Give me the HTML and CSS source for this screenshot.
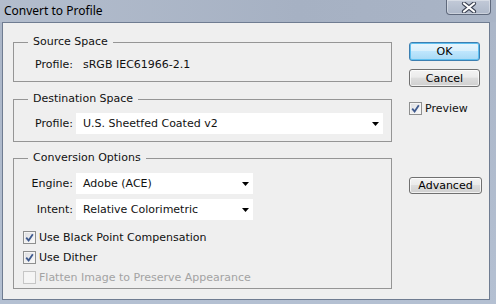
FILE: index.html
```html
<!DOCTYPE html>
<html lang="en">
<head>
    <meta charset="UTF-8">
    <meta name="viewport" content="width=device-width, initial-scale=1.0">
    <link rel="stylesheet" href="styles.css">
</head>
<body>
    <div class="window">
        <div class="titlebar">
            <span class="title">Convert to Profile</span>
            <div class="close">
                <svg width="16" height="11" viewBox="0 0 16 11">
                    <path d="M3 1.5 L13 9.5 M13 1.5 L3 9.5" stroke="#3b4252" stroke-width="4.2" stroke-linecap="round"/>
                    <path d="M3 1.5 L13 9.5 M13 1.5 L3 9.5" stroke="#ffffff" stroke-width="2.2" stroke-linecap="round"/>
                </svg>
            </div>
        </div>
        <div class="client">
            <div class="groups">
                <fieldset class="group group-source">
                    <legend>Source Space</legend>
                    <div class="row">
                        <span class="label">Profile:</span>
                        <span class="value">sRGB IEC61966-2.1</span>
                    </div>
                </fieldset>

                <fieldset class="group group-dest">
                    <legend>Destination Space</legend>
                    <div class="row">
                        <span class="label">Profile:</span>
                        <div class="dropdown dropdown-wide">
                            <span>U.S. Sheetfed Coated v2</span>
                            <svg class="arrow" width="7" height="4" viewBox="0 0 7 4"><path d="M0 0 H7 L3.5 4 Z" fill="#000"/></svg>
                        </div>
                    </div>
                </fieldset>

                <fieldset class="group group-conv">
                    <legend>Conversion Options</legend>
                    <div class="row">
                        <span class="label">Engine:</span>
                        <div class="dropdown">
                            <span>Adobe (ACE)</span>
                            <svg class="arrow" width="7" height="4" viewBox="0 0 7 4"><path d="M0 0 H7 L3.5 4 Z" fill="#000"/></svg>
                        </div>
                    </div>
                    <div class="row row-gap">
                        <span class="label">Intent:</span>
                        <div class="dropdown">
                            <span>Relative Colorimetric</span>
                            <svg class="arrow" width="7" height="4" viewBox="0 0 7 4"><path d="M0 0 H7 L3.5 4 Z" fill="#000"/></svg>
                        </div>
                    </div>
                    <div class="checks">
                        <div class="check-row">
                            <span class="check checked">
                                <svg width="9" height="9" viewBox="0 0 9 9"><path d="M1.2 4.6 L3.6 7.4 L7.8 1.2" fill="none" stroke="#3f5a8e" stroke-width="1.8"/></svg>
                            </span>
                            <span>Use Black Point Compensation</span>
                        </div>
                        <div class="check-row">
                            <span class="check checked">
                                <svg width="9" height="9" viewBox="0 0 9 9"><path d="M1.2 4.6 L3.6 7.4 L7.8 1.2" fill="none" stroke="#3f5a8e" stroke-width="1.8"/></svg>
                            </span>
                            <span>Use Dither</span>
                        </div>
                        <div class="check-row disabled">
                            <span class="check"></span>
                            <span>Flatten Image to Preserve Appearance</span>
                        </div>
                    </div>
                </fieldset>
            </div>

            <div class="actions">
                <div class="btn btn-default">OK</div>
                <div class="btn btn-cancel">Cancel</div>
                <div class="check-row preview">
                    <span class="check checked">
                        <svg width="9" height="9" viewBox="0 0 9 9"><path d="M1.2 4.6 L3.6 7.4 L7.8 1.2" fill="none" stroke="#3f5a8e" stroke-width="1.8"/></svg>
                    </span>
                    <span>Preview</span>
                </div>
                <div class="btn btn-advanced">Advanced</div>
            </div>
        </div>
    </div>
</body>
</html>
```

FILE: styles.css
```css
body {
    margin: 0;
    font-family: "DejaVu Sans", Verdana, sans-serif;
    font-size: 11px;
    color: #111;
}

.window {
    width: 496px;
    height: 304px;
    box-sizing: border-box;
    padding: 0 6px 4px 2px;
    display: flex;
    flex-direction: column;
    background: linear-gradient(to bottom, #aab5c7, #b4c0d2);
}

.titlebar {
    height: 22px;
    display: flex;
    justify-content: space-between;
    align-items: flex-start;
    background: linear-gradient(to right, #b3bdcd, #a6b1c3 60%, #a9b4c6);
    margin: 0 -6px 0 -2px;
    padding: 0 5px 0 4px;
}

.title {
    font-family: "Noto Sans", "Open Sans", sans-serif;
    font-size: 12px;
    line-height: 22px;
    color: #000;
}

.close {
    width: 43px;
    height: 14px;
    border: 1px solid #5f697c;
    border-top: none;
    border-radius: 0 0 4px 4px;
    background: linear-gradient(to bottom, #c2cad8, #aeb8c9);
    box-shadow: inset 0 0 0 1px rgba(255, 255, 255, 0.35);
    display: flex;
    justify-content: center;
    align-items: center;
}

.client {
    flex: 1;
    display: flex;
    border: 1px solid #6f7c91;
    background: #efefef;
    padding: 12px 0 0 10px;
}

.groups {
    width: 379px;
    display: flex;
    flex-direction: column;
}

.group {
    margin: 0;
    padding: 0;
    border: 1px solid #959595;
    min-width: 0;
}

.group legend {
    margin-left: 14px;
    padding: 0 5px;
    line-height: 14px;
    height: 14px;
}

.group-source {
    padding: 5px 0 6px 0;
}

.group-dest {
    margin-top: 10px;
    padding: 7px 0 7px 0;
}

.group-conv {
    margin-top: 9px;
    padding: 8px 0 1px 0;
}

.row {
    display: flex;
    align-items: center;
    height: 21px;
}

.row-gap {
    margin-top: 5px;
}

.label {
    width: 59px;
    text-align: right;
    margin-right: 3px;
}

.value {
    padding-left: 7px;
}

.dropdown {
    width: 177px;
    height: 21px;
    box-sizing: border-box;
    background: #fff;
    display: flex;
    align-items: center;
    justify-content: space-between;
    padding: 0 4px 0 7px;
}

.dropdown-wide {
    width: 307px;
}

.arrow {
    margin-top: 1px;
}

.checks {
    margin-top: 7px;
    padding-left: 9px;
}

.check-row {
    display: flex;
    align-items: center;
    height: 20px;
}

.check {
    width: 13px;
    height: 13px;
    box-sizing: border-box;
    border: 1px solid #8e8f8f;
    background: linear-gradient(135deg, #dcdde0, #fbfbfb);
    box-shadow: inset 0 0 0 1px #f4f4f4;
    margin-right: 3px;
    display: flex;
    align-items: center;
    justify-content: center;
}

.disabled {
    color: #a3a3a3;
}

.disabled .check {
    border-color: #c6c6c6;
    background: #f5f5f5;
}

.actions {
    margin-left: 17px;
    padding-top: 7px;
    width: 73px;
    display: flex;
    flex-direction: column;
}

.btn {
    width: 71px;
    height: 19px;
    box-sizing: border-box;
    border: 1px solid #707070;
    border-radius: 3px;
    display: flex;
    align-items: center;
    justify-content: center;
    color: #000;
    background: linear-gradient(to bottom, #f3f3f3 0%, #ebebeb 45%, #dddddd 50%, #cfcfcf 100%);
    box-shadow: inset 0 0 0 1px rgba(255, 255, 255, 0.7);
}

.btn-default {
    border-color: #3c7fb1;
    background: linear-gradient(to bottom, #eaf6fd 0%, #d9f0fc 45%, #bee6fd 50%, #a7d9f5 100%);
    box-shadow: inset 0 0 0 1px #5ec0f0;
}

.btn-cancel {
    margin-top: 8px;
    height: 18px;
}

.preview {
    margin-top: 11px;
}

.btn-advanced {
    margin-top: 59px;
    width: 73px;
    height: 17px;
}
```
